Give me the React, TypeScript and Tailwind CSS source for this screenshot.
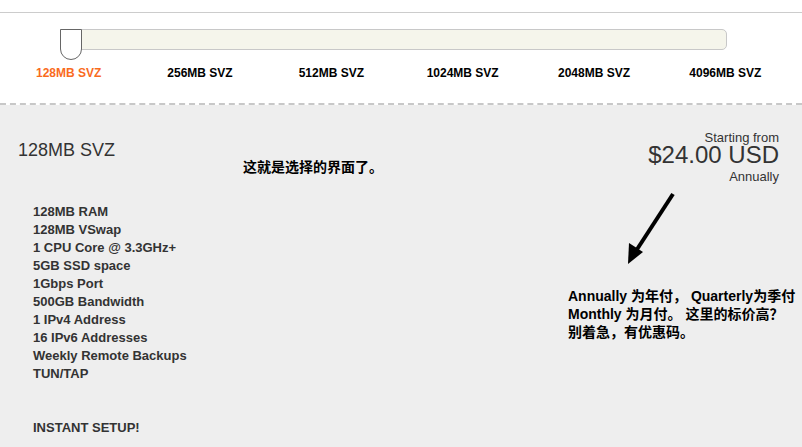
const PLANS = ["128MB SVZ", "256MB SVZ", "512MB SVZ", "1024MB SVZ", "2048MB SVZ", "4096MB SVZ"];

const FEATURES = [
  "128MB RAM",
  "128MB VSwap",
  "1 CPU Core @ 3.3GHz+",
  "5GB SSD space",
  "1Gbps Port",
  "500GB Bandwidth",
  "1 IPv4 Address",
  "16 IPv6 Addresses",
  "Weekly Remote Backups",
  "TUN/TAP",
];

function Arrow() {
  return (
    <svg width="60" height="80" viewBox="0 0 60 80" aria-hidden="true">
      <line x1="55" y1="3" x2="16" y2="63" stroke="#000" strokeWidth="4" />
      <polygon points="10,73 11,52 25,61" fill="#000" />
    </svg>
  );
}

export default function App() {
  return (
    <div className="w-[802px] h-[447px] overflow-hidden bg-white font-['Liberation_Sans','Noto_Sans_CJK_SC',sans-serif]">
      <div className="h-[12px]" />
      <div className="h-px bg-[#cccccc]" />

      {/* Slider */}
      <div className="relative ml-[60px] mt-[16px] w-[667px] h-[31px]">
        <div className="mt-[4px] h-[21px] rounded-r-[5px] border border-[#c8c8c8] bg-[#f5f5eb]" />
        <div className="absolute left-0 top-0 w-[22px] h-[31px] rounded-b-[11px] border border-[#666666] bg-white" />
      </div>

      <div className="ml-[3px] mt-[6px] grid w-[788px] grid-cols-6">
        {PLANS.map((p, i) => (
          <div
            key={p}
            className={`text-center text-[12px] leading-[14px] font-bold ${
              i === 0 ? "text-[#f96b1e]" : "text-black"
            }`}
          >
            {p}
          </div>
        ))}
      </div>

      <div className="mt-[23px] border-t-2 border-dashed border-[#c8c8c8]" />

      {/* Plan detail */}
      <div className="relative h-[342px] bg-[#eeeeee]">
        <div className="flex justify-between">
          <div className="pl-[18px] pt-[36px]">
            <div className="text-[18px] leading-[18px] text-[#333333]">128MB SVZ</div>
            <div className="mt-[44px] pl-[15px] text-[13px] leading-[18px] font-bold text-[#333333]">
              {FEATURES.map((f) => (
                <div key={f}>{f}</div>
              ))}
              <div className="mt-[36px]">INSTANT SETUP!</div>
            </div>
          </div>

          <div className="pr-[23px] pt-[27px] text-right text-[#333333]">
            <div className="text-[13px] leading-[11px]">Starting from</div>
            <div className="text-[24px] leading-[24px]">$24.00 USD</div>
            <div className="mt-[3px] text-[13px] leading-[13px]">Annually</div>
          </div>
        </div>

        {/* annotations */}
        <div className="absolute left-[243px] top-[55px] text-[14px] leading-[14px] font-bold text-black">
          这就是选择的界面了。
        </div>
        <div className="absolute left-[618px] top-[86px]">
          <Arrow />
        </div>
        <div className="absolute left-[568px] top-[182px] text-[14px] leading-[18px] font-bold text-black whitespace-nowrap">
          <div>Annually 为年付， Quarterly为季付</div>
          <div>Monthly 为月付。 这里的标价高？</div>
          <div>别着急，有优惠码。</div>
        </div>
      </div>
    </div>
  );
}
